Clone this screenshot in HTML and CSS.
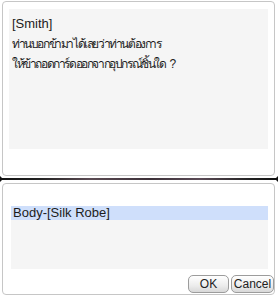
FILE: index.html
```html
<!DOCTYPE html>
<html lang="th">
<head>
  <meta charset="UTF-8" />
  <meta name="viewport" content="width=device-width, initial-scale=1.0" />
  <title>NPC Dialog</title>
  <link rel="stylesheet" href="styles.css">
</head>
<body>
  <div class="dialog">
    <div class="panel talk">
      <div class="message">
        <div class="line">[Smith]</div>
        <div class="line thai">ท่านบอกข้ามาได้เลยว่าท่านต้องการ</div>
        <div class="line thai">ให้ข้าถอดการ์ดออกจากอุปกรณ์ชิ้นใด ?</div>
      </div>
    </div>
    <div class="splitter"></div>
    <div class="panel choose">
      <div class="list">
        <div class="list-item selected">Body-[Silk Robe]</div>
      </div>
      <div class="buttons">
        <button class="btn ok">OK</button>
        <button class="btn cancel">Cancel</button>
      </div>
    </div>
  </div>
</body>
</html>
```

FILE: styles.css
```css
body {
  margin: 0;
  padding: 0;
  background: #fff;
  font-family: "Liberation Sans", Arial, sans-serif;
  font-size: 12px;
  color: #1c1c1c;
}
.dialog {
  width: 278px;
  height: 298px;
  padding-top: 1px;
  box-sizing: border-box;
}
.panel {
  margin: 0 3px 0 2px;
  border: 1px solid #c6c6c6;
  border-radius: 4px;
  box-sizing: border-box;
  background: #fff;
}
.talk {
  height: 175px;
  padding: 7px 6px 0 6px;
}
.message {
  background: #f5f5f5;
  height: 140px;
  padding: 5px 3px;
  box-sizing: border-box;
}
.line {
  height: 20px;
  line-height: 20px;
  font-size: 13px;
}
.thai {
  font-size: 12px;
  letter-spacing: -1.4px;
  word-spacing: 2px;
}
.splitter {
  position: relative;
  height: 2px;
  margin: 2px 0 3px 0;
  background: linear-gradient(90deg, #111 0, #222 40px, #5a4a52 90px, #3c3038 150px, #5a4a55 200px, #222 250px, #111 100%);
}
.splitter::before,
.splitter::after {
  content: "";
  position: absolute;
  top: -2px;
  border-top: 3px solid transparent;
  border-bottom: 3px solid transparent;
}
.splitter::before {
  left: 0;
  border-left: 3px solid #111;
}
.splitter::after {
  right: 0;
  border-right: 3px solid #111;
}
.choose {
  height: 112px;
  padding: 22px 6px 0 8px;
}
.list {
  background: #f5f5f5;
  height: 63px;
}
.list-item {
  height: 14px;
  line-height: 14px;
  padding-left: 2px;
  font-size: 13px;
}
.list-item.selected {
  background: #cfdffb;
}
.buttons {
  display: flex;
  justify-content: flex-end;
  gap: 2px;
  margin-top: 6px;
  margin-right: -6px;
}
.btn {
  height: 18px;
  padding: 0;
  border: 1px solid #9c9c9c;
  border-radius: 5px;
  background: linear-gradient(#ffffff, #ececec 60%, #d8d8d8);
  font-family: "Liberation Sans", Arial, sans-serif;
  font-size: 12px;
  color: #222;
}
.ok {
  width: 41px;
}
.cancel {
  width: 43px;
}
```
